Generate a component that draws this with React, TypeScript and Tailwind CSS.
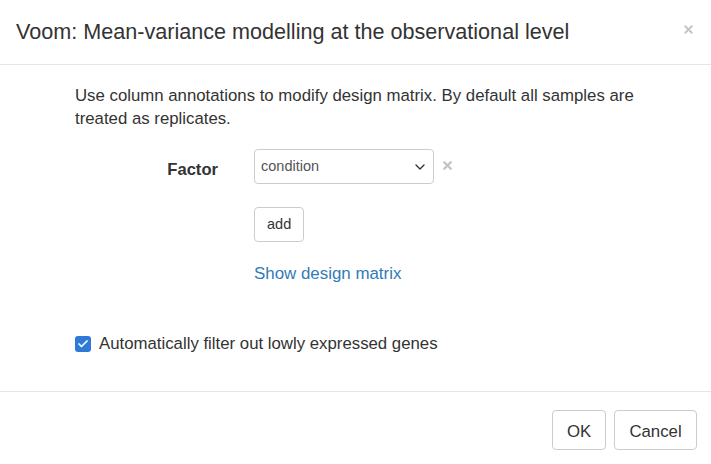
import { Check, ChevronDown, X } from 'lucide-react';

export default function App() {
  return (
    <div
      className="w-[711px] h-[464px] bg-white text-[#333] overflow-hidden flex flex-col"
      style={{ fontFamily: '"Liberation Sans", Arial, sans-serif' }}
    >
      {/* header */}
      <div className="h-[65px] shrink-0 border-b border-[#e5e5e5] flex items-center justify-between pl-[16px] pr-[16px]">
        <h4 className="text-[21.6px] leading-none">Voom: Mean-variance modelling at the observational level</h4>
        <X className="w-[13px] h-[13px] text-[#c4c4c4] mt-[-6px]" strokeWidth={3.5} />
      </div>

      {/* body */}
      <div className="flex-1 pl-[75px] pr-[70px] pt-[19px]">
        <p className="text-[16.8px] leading-[23px]">
          Use column annotations to modify design matrix. By default all samples are treated as replicates.
        </p>

        <div className="flex items-center mt-[19px]">
          <label className="w-[143px] text-right font-bold text-[16.6px] mt-[7px]">Factor</label>
          <div className="ml-[36px] flex items-center">
            <div className="w-[180px] h-[35px] border border-[#ccc] rounded-[4px] flex items-center justify-between pl-[6px] pr-[5px] text-[14.5px] text-[#555]">
              <span>condition</span>
              <ChevronDown className="w-[16px] h-[16px] text-[#333]" strokeWidth={2} />
            </div>
            <X className="ml-[7px] w-[13px] h-[13px] text-[#c4c4c4] mt-[-3px]" strokeWidth={4.5} />
          </div>
        </div>

        <div className="ml-[179px] mt-[23px]">
          <button className="h-[35px] px-[12px] border border-[#ccc] rounded-[4px] text-[14.5px] text-[#333] bg-white">
            add
          </button>
        </div>

        <div className="ml-[179px] mt-[20px] text-[16.9px] leading-[23px] text-[#337ab7]">Show design matrix</div>

        <div className="flex items-center mt-[46px]">
          <div className="w-[16px] h-[16px] rounded-[3px] bg-[#2e7ad6] flex items-center justify-center">
            <Check className="w-[12px] h-[12px] text-white" strokeWidth={3.5} />
          </div>
          <span className="ml-[8px] text-[16.8px]">Automatically filter out lowly expressed genes</span>
        </div>
      </div>

      {/* footer */}
      <div className="h-[73px] shrink-0 border-t border-[#e5e5e5] flex items-start justify-end gap-[8px] pr-[14px] pt-[18px]">
        <button className="h-[40px] w-[54px] pt-[3px] border border-[#ccc] rounded-[4px] text-[16.8px] bg-white">OK</button>
        <button className="h-[40px] w-[83px] pt-[3px] border border-[#ccc] rounded-[4px] text-[16.8px] bg-white">Cancel</button>
      </div>
    </div>
  );
}
